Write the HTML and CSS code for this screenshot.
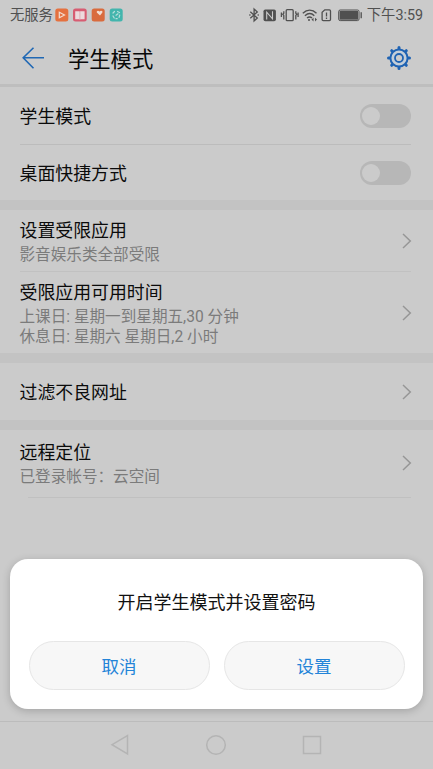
FILE: index.html
```html
<!DOCTYPE html>
<html lang="zh-CN">
<head>
<meta charset="utf-8">
<title>学生模式</title>
<link rel="stylesheet" href="styles.css">
</head>
<body>
<div class="screen">
  <div class="status">
    <span class="carrier">无服务</span>
    <svg class="apps" viewBox="0 0 68 14" width="68" height="14">
      <rect x="0.3" y="0.5" width="13" height="13" rx="2.5" fill="#e5713f"/>
      <path d="M4.3 4.2l5.2 2.8-5.2 2.8z" fill="none" stroke="#f4dccf" stroke-width="1.2"/>
      <rect x="18" y="0.5" width="13.7" height="13" rx="2.5" fill="#d75d72"/>
      <path d="M20.2 3.2h4.2l.5.6.5-.6h4.2v8h-4.2l-.5.5-.5-.5h-4.2z" fill="#eddadd"/>
      <path d="M24.9 3.8v7.5" stroke="#d99aa5" stroke-width=".7"/>
      <rect x="36.7" y="0.5" width="13" height="13" rx="2.5" fill="#d96b3d"/>
      <path d="M45 7.5L42 4.8c-1-1.4.8-3 2.5-1.4 1.6-1.4 3.8-.4 2.7 1.3z" fill="#f2ddd1"/>
      <rect x="54.7" y="0.5" width="13" height="13" rx="2.5" fill="#43b5ad"/>
      <path d="M58 5l1.5-1.5M62.5 3.5l2 1M64.7 7l-.6 2.3M58 8l1.2 2M61 7.2l2-1.4M61 10.7h1.2" fill="none" stroke="#b8dfdb" stroke-width="1.2" stroke-linecap="round"/>
    </svg>
    <svg class="indicators" viewBox="0 0 115 16" width="115" height="16">
      <g fill="none" stroke="#505050" stroke-width="1.3">
        <path d="M1.3 4.8l7 6.2-3.2 3V2l3.2 3-7 6.2"/>
        <path d="M.3 8h1.2M8.6 8h1.2"/>
        <rect x="14.5" y="2.4" width="12.4" height="11.8" rx="1.8" fill="#505050" stroke="none"/>
        <path d="M17.7 12.4V5.2l5.8 6.6V4.2" stroke="#cbcbcb" stroke-width="1.1"/>
        <rect x="37.2" y="2.7" width="7" height="11" rx="1"/>
        <path d="M34.8 4.2v2l-1 1 1 1.2v4M32.4 5.5v4.5M46.8 4.2v2l1 1-1 1.2v4M49.1 5.5v4.5"/>
        <path d="M53.8 6.3c4.3-4 9.6-4 13.7 0M55.9 8.8c3.1-2.8 6.6-2.8 9.4 0M58 11c1.8-1.5 3.3-1.5 5 0" stroke-width="1.4"/>
        <path d="M75.8 2.8h4.6c.7 0 1.1.5 1.1 1.2v8.6c0 .7-.4 1.1-1.1 1.1h-6.2c-.7 0-1.1-.4-1.1-1.1V5.4z"/>
        <path d="M77.5 5.5v4M77.5 10.6v1.4" stroke-width="1.3"/>
        <rect x="89.7" y="3" width="20.3" height="10.6" rx="1.5" stroke-width="1"/>
        <path d="M112.2 5.2v6" stroke-width="1.3"/>
      </g>
      <g fill="#505050">
        <circle cx="60" cy="13" r="1"/>
        <path d="M62.5 12.6l2-1.8v3.6zM68 12.6l-2 1.8v-3.6z"/>
        <rect x="90.6" y="3.9" width="18.4" height="8.8"/>
      </g>
    </svg>
    <span class="clock">下午3:59</span>
  </div>
  <header class="header">
    <svg viewBox="0 0 22 22" width="22" height="22" fill="none" stroke="#2068b4" stroke-width="1.6"><path d="M22 10.8H1.2M11.5.7L1.2 10.8l10.3 10.5"/></svg>
    <h1>学生模式</h1>
    <svg class="gear" viewBox="-12 -12 24 24" width="24" height="24">
      <g stroke="#1f63b3" stroke-width="3" stroke-linecap="round">
        <path d="M0-10.5V10.5M-10.5 0H10.5M-7.3-7.3L7.3 7.3M-7.3 7.3L7.3-7.3"/>
      </g>
      <circle r="8.6" fill="#c3ced9" stroke="#1f63b3" stroke-width="2"/>
      <circle r="4" fill="#cbcbcb" stroke="#1f63b3" stroke-width="1.8"/>
    </svg>
  </header>
  <main>
    <section class="group">
      <div class="row mode"><h2>学生模式</h2><span class="switch"></span></div>
      <div class="row shortcut"><h2>桌面快捷方式</h2><span class="switch"></span></div>
    </section>
    <section class="group">
      <div class="row apps-row">
        <div><h2>设置受限应用</h2><p>影音娱乐类全部受限</p></div>
        <svg class="chevron" viewBox="0 0 10 16" width="10" height="16"><path d="M1 1l7.3 7L1 15"/></svg>
      </div>
      <div class="row time-row">
        <div><h2>受限应用可用时间</h2><p>上课日: 星期一到星期五,30 分钟</p><p>休息日: 星期六 星期日,2 小时</p></div>
        <svg class="chevron" viewBox="0 0 10 16" width="10" height="16"><path d="M1 1l7.3 7L1 15"/></svg>
      </div>
    </section>
    <section class="group">
      <div class="row filter-row"><h2>过滤不良网址</h2>
        <svg class="chevron" viewBox="0 0 10 16" width="10" height="16"><path d="M1 1l7.3 7L1 15"/></svg>
      </div>
    </section>
    <section class="group">
      <div class="row locate-row">
        <div><h2>远程定位</h2><p>已登录帐号：云空间</p></div>
        <svg class="chevron" viewBox="0 0 10 16" width="10" height="16"><path d="M1 1l7.3 7L1 15"/></svg>
      </div>
    </section>
  </main>
  <nav class="navbar">
    <svg viewBox="0 0 20 22" width="20" height="22"><path d="M17.5 1.5v18.5L2 10.7z"/></svg>
    <svg viewBox="0 0 22 22" width="22" height="22"><circle cx="11" cy="11" r="9.3"/></svg>
    <svg viewBox="0 0 20 20" width="20" height="20"><rect x="1.5" y="1.5" width="17" height="17"/></svg>
  </nav>
  <div class="dialog">
    <p class="message">开启学生模式并设置密码</p>
    <div class="actions"><button>取消</button><button>设置</button></div>
  </div>
</div>
</body>
</html>
```
FILE: styles.css
```css
* { box-sizing: border-box; }
body, h1, h2, p { margin: 0; }
body { font-family: Roboto, "Noto Sans CJK SC", sans-serif; background: #cbcbcb; }
.screen {
  position: relative;
  display: flex;
  flex-direction: column;
  width: 433px;
  height: 769px;
  overflow: hidden;
  background: #cbcbcb;
  white-space: nowrap;
}
.status {
  display: flex;
  align-items: center;
  height: 30px;
  padding: 0 10px;
  font-size: 14.3px;
  line-height: 30px;
  color: #505050;
}
.apps { margin-left: 2px; }
.indicators { margin-left: auto; margin-top: -1px; }
.clock { margin-left: 3px; }
.header {
  display: flex;
  align-items: center;
  height: 57px;
  padding: 2px 22px 0;
  border-bottom: 3px solid #bebebe;
}
h1 { margin-left: 24px; padding-top: 3px; font-size: 21.3px; line-height: 30px; font-weight: 400; color: #080808; }
.gear { margin-left: auto; }
.group + .group { border-top: 10px solid #c3c3c3; }
.row {
  display: flex;
  align-items: center;
  justify-content: space-between;
  margin: 0 22.5px 0 19.5px;
}
.row + .row { border-top: 1px solid #bcbcbc; }
h2 { padding-top: 2px; font-size: 17.9px; line-height: 24px; font-weight: 400; color: #0b0b0b; }
.row p { font-size: 15.6px; line-height: 20px; color: #7b7b7b; }
.row div h2 { padding: 1px 0 2px; line-height: 25px; }
.mode { height: 57px; }
.shortcut { height: 56px; }
.apps-row { height: 61px; }
.apps-row + .time-row { height: 82px; border-color: #c1c1c1; }
.filter-row { height: 57px; }
.locate-row { position: relative; height: 67px; padding-bottom: 2px; }
.locate-row::after {
  content: "";
  position: absolute;
  left: 8px;
  right: 0;
  bottom: -1px;
  height: 1px;
  background: #c0c0c0;
}
.switch {
  width: 51px;
  height: 24px;
  padding: 3px 2px;
  border-radius: 12px;
  background: #b7b7b7;
}
.switch::before {
  content: "";
  display: block;
  width: 18px;
  height: 18px;
  border-radius: 50%;
  background: #cbcbcb;
}
.chevron { margin-right: -1px; fill: none; stroke: #969696; stroke-width: 1.5; }
.navbar {
  display: flex;
  align-items: center;
  justify-content: center;
  gap: 75px;
  height: 48px;
  margin-top: auto;
  padding: 0 1px 1px 0;
  border-top: 1px solid #bcbcbc;
}
.navbar svg { fill: none; stroke: #b4b4b4; stroke-width: 1.5; }
.dialog {
  position: absolute;
  left: 10px;
  right: 10px;
  bottom: 60px;
  height: 150px;
  padding: 30px 18.5px 0;
  border-radius: 18px;
  background: #fff;
  box-shadow: 0 2px 9px rgba(0, 0, 0, .2);
}
.message { font-size: 18px; line-height: 28px; text-align: center; color: #111; }
.actions { display: flex; gap: 14px; margin-top: 24px; }
button {
  flex: 1;
  height: 49px;
  padding: 2px 0 0;
  border: 1px solid #e6e6e6;
  border-radius: 25px;
  background: #f7f7f7;
  font: 17.5px/26px Roboto, "Noto Sans CJK SC", sans-serif;
  color: #2384d8;
}
```
